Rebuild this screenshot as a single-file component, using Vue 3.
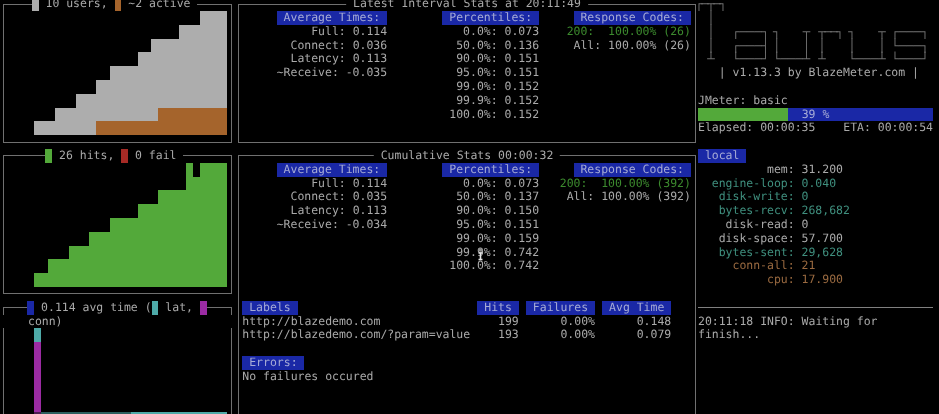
<script setup>
const expand = (steps) => steps.flatMap(([n, h]) => Array(n).fill(h))
const ROW = 13.8

const users = expand([[3,1],[3,2],[3,3],[2,4],[4,5],[2,6],[4,7],[3,8],[4,9]])
const active = expand([[9,0],[9,1],[10,2]])
const userBars = users.map((u, i) => ({ top: (u - active[i]) * ROW, bottom: active[i] * ROW }))
const hitBars = expand([[2,1],[3,2],[3,3],[3,4],[4,5],[3,6],[4,7],[1,9],[1,8],[4,9]]).map(h => h * ROW)
const timeBars = expand([[13,1],[14,2]])

const latest = {
  avg: ['Full: 0.114', 'Connect: 0.036', 'Latency: 0.113', '~Receive: -0.035'],
  pct: ['0.0%: 0.073','50.0%: 0.136','90.0%: 0.151','95.0%: 0.151','99.0%: 0.152','99.9%: 0.152','100.0%: 0.152'],
  codes: ['200:  100.00% (26)', 'All: 100.00% (26)'],
}
const cumulative = {
  avg: ['Full: 0.114', 'Connect: 0.035', 'Latency: 0.113', '~Receive: -0.034'],
  pct: ['0.0%: 0.073','50.0%: 0.137','90.0%: 0.150','95.0%: 0.151','99.0%: 0.159','99.9%: 0.742','100.0%: 0.742'],
  codes: ['200:  100.00% (392)', 'All: 100.00% (392)'],
}
const labels = [
  ['http://blazedemo.com', '199', '0.00%', '0.148'],
  ['http://blazedemo.com/?param=value', '193', '0.00%', '0.079'],
]
const logo = [
  ['┌─┬─┐', '  │', '  │', '  │', '  ┴'],
  [' ', ' ', '┌───┐', '┌───┤', '└───┘'],
  [' ', ' ', '┐   ┬', '│   │', '└───┴'],
  [' ', ' ', '┬──┐', '│', '┴'],
  [' ', ' ', '┐   ┬', '│   │', '└───┴'],
  [' ', ' ', '┌───┐', '└───┐', '└───┘'],
]
const metrics = [
  ['mem:', '31.200', ''],
  ['engine-loop:', '0.040', 'teal'],
  ['disk-write:', '0', 'teal'],
  ['bytes-recv:', '268,682', 'teal'],
  ['disk-read:', '0', ''],
  ['disk-space:', '57.700', ''],
  ['bytes-sent:', '29,628', 'teal'],
  ['conn-all:', '21', 'brown'],
  ['cpu:', '17.900', 'brown'],
]
</script>

<template>
  <div class="term">
    <div class="left">
      <section class="pane">
        <div class="title t-users"> <i class="sw gray"></i> 10 users, <i class="sw brown-bg"></i> ~2 active </div>
        <div class="chart">
          <div v-for="(b, i) in userBars" :key="i" class="col">
            <div class="gray" :style="{ height: b.top + 'px' }"></div>
            <div class="brown-bg" :style="{ height: b.bottom + 'px' }"></div>
          </div>
        </div>
      </section>
      <section class="pane">
        <div class="title t-hits"> <i class="sw green"></i> 26 hits, <i class="sw red"></i> 0 fail </div>
        <div class="chart">
          <div v-for="(h, i) in hitBars" :key="i" class="col">
            <div class="green" :style="{ height: h + 'px' }"></div>
          </div>
        </div>
      </section>
      <section class="pane open">
        <div class="title t-time"> <i class="sw blue"></i> 0.114 avg time (<i class="sw cyan"></i> lat, <i class="sw magenta"></i></div>
        <div class="title t-conn">conn)</div>
        <div class="chart chart-time">
          <div class="col">
            <div class="cyan seg-a"></div>
            <div class="magenta seg-b"></div>
            <div class="dark-magenta seg-c"></div>
          </div>
          <div v-for="(kind, i) in timeBars" :key="i" class="col">
            <div :class="kind === 1 ? 'dark-teal' : 'cyan'" class="seg-c"></div>
          </div>
        </div>
      </section>
    </div>

    <div class="middle">
      <section class="pane wide">
        <div class="title center"> Latest Interval Stats at 20:11:49 </div>
        <div class="stats">
          <div class="stack"><span class="hd"> Average Times: </span><span v-for="l in latest.avg" :key="l">{{ l }}</span></div>
          <div class="stack"><span class="hd"> Percentiles: </span><span v-for="l in latest.pct" :key="l">{{ l }}</span></div>
          <div class="stack">
            <span class="hd"> Response Codes: </span>
            <span class="ok">{{ latest.codes[0] }}</span>
            <span>{{ latest.codes[1] }}</span>
          </div>
        </div>
      </section>
      <section class="pane wide tall">
        <div class="title center"> Cumulative Stats 00:00:32 </div>
        <div class="stats">
          <div class="stack"><span class="hd"> Average Times: </span><span v-for="l in cumulative.avg" :key="l">{{ l }}</span></div>
          <div class="stack"><span class="hd"> Percentiles: </span><span v-for="l in cumulative.pct" :key="l">{{ l }}</span></div>
          <div class="stack">
            <span class="hd"> Response Codes: </span>
            <span class="ok">{{ cumulative.codes[0] }}</span>
            <span>{{ cumulative.codes[1] }}</span>
          </div>
        </div>
        <div class="table">
          <div><span class="hd"> Labels </span></div>
          <div class="num"><span class="hd"> Hits </span></div>
          <div class="num"><span class="hd"> Failures </span></div>
          <div class="num"><span class="hd"> Avg Time </span></div>
          <template v-for="r in labels" :key="r[0]">
            <div>{{ r[0] }}</div>
            <div class="num">{{ r[1] }}</div>
            <div class="num">{{ r[2] }}</div>
            <div class="num">{{ r[3] }}</div>
          </template>
        </div>
        <div class="errors">
          <div><span class="hd"> Errors: </span></div>
          <div>No failures occured</div>
        </div>
        <svg class="cursor" width="7" height="13" viewBox="0 0 7 13">
          <ellipse cx="3.5" cy="2" rx="2.4" ry="1.8" fill="#8d8d8d" />
          <path d="M1.5 5h4M3.5 5v6M1.5 11.5h4" stroke="#e4e4e4" stroke-width="1.6" fill="none" />
        </svg>
      </section>
    </div>

    <div class="right">
      <div class="logo">
        <div v-for="(letter, i) in logo" :key="i" class="glyph" :class="{ tight: i === 0 || i === 3 }">
          <div v-for="(row, j) in letter" :key="j">{{ row }}</div>
        </div>
      </div>
      <div class="tag">| v1.13.3 by BlazeMeter.com |</div>
      <div class="blank"></div>
      <div>JMeter: basic</div>
      <div class="progress">
        <div class="done"></div>
        <div class="pct">39 %</div>
      </div>
      <div class="split"><span>Elapsed: 00:00:35</span><span>ETA: 00:00:54</span></div>
      <div class="blank"></div>
      <div><span class="hd"> local </span></div>
      <div v-for="m in metrics" :key="m[0]" class="metric" :class="m[2]">
        <span class="k">{{ m[0] }}</span><span>{{ m[1] }}</span>
      </div>
      <div class="blank"></div>
      <div class="rule"></div>
      <div class="log">20:11:18 INFO: Waiting for finish...</div>
    </div>
  </div>
</template>

<style scoped>
.term {
  width: 939px;
  height: 414px;
  overflow: hidden;
  box-sizing: border-box;
  background: #000;
  color: #a9a9a9;
  font-family: "DejaVu Sans Mono", "Liberation Mono", monospace;
  font-size: 11.47px;
  line-height: 13.8px;
  text-rendering: geometricPrecision;
  white-space: pre;
  display: flex;
  align-items: flex-start;
  padding: 3.6px 0 0 3px;
  filter: blur(0.35px);
}
.left { width: 229px; display: flex; flex-direction: column; gap: 12.8px; flex: none; }
.middle { width: 458px; margin-left: 6px; display: flex; flex-direction: column; gap: 12.8px; flex: none; }
.right { width: 235px; margin-left: 2px; margin-top: -6.4px; flex: none; }

.pane {
  position: relative;
  box-sizing: border-box;
  height: 139px;
  border: 1px solid #707070;
  padding-top: 6.4px;
}
.pane.open { height: 140px; }
.pane.tall { height: 290px; }
.wide { padding-left: 3.3px; }

.title { position: absolute; top: -7.4px; background: #000; }
.center { left: 50%; transform: translateX(-50%); }
.t-users { left: 27.7px; }
.t-hits { left: 41.3px; }
.t-time { left: 23.3px; }
.t-conn { top: 6.4px; left: -1px; right: -1px; padding-left: 25px; }

.sw { display: inline-block; width: 1ch; height: 13.8px; vertical-align: top; }
.gray { background: #adadad; }
.brown-bg { background: #a5642c; }
.green { background: #53a93a; }
.red { background: #a62a25; }
.blue { background: #1a28a6; }
.cyan { background: #4eaaa8; }
.magenta { background: #9b2ba3; }
.dark-magenta { background: #4d1c52; }
.dark-teal { background: #2c5f5e; }

.chart {
  display: flex;
  align-items: flex-end;
  height: 124.2px;
  margin-left: 30.3px;
}
.col { width: 6.9px; flex: none; }
.chart-time { height: 85.8px; margin-top: 13.6px; }
.seg-a { height: 13.5px; }
.seg-b { height: 70.3px; }
.seg-c { height: 2px; }

.stats {
  display: grid;
  grid-template-columns: 16ch 22ch 22ch;
  margin-left: 34.4px;
}
.stack { display: flex; flex-direction: column; align-items: flex-end; }
.hd { display: inline-block; background: #1a28a6; color: #a6abd6; }
.ok { color: #3c8a2e; }

.table {
  display: grid;
  grid-template-columns: 33ch 6ch 10ch 10ch;
  column-gap: 7.2px;
  margin-top: 27.6px;
}
.num { text-align: right; }
.errors { margin-top: 13.8px; }
.cursor { position: absolute; left: 238px; top: 91.6px; }

.logo {
  display: grid;
  grid-template-columns: 36.7px 41px 45.3px 30px 43px auto;
  margin-left: -2.7px;
  color: #6e6e6e;
}
.glyph { font-size: 12.4px; line-height: 13.8px; }
.tight { letter-spacing: -1.5px; }

.tag { padding-left: 3ch; }
.blank { height: 13.8px; }
.progress {
  display: flex;
  position: relative;
  height: 13.8px;
  background: #1a28a6;
}
.done { width: 90.3px; background: #53a93a; }
.pct { position: absolute; left: 0; right: 0; text-align: center; color: #a6abd6; }
.split { display: flex; justify-content: space-between; }
.metric { display: grid; grid-template-columns: 14ch 1fr; column-gap: 1ch; }
.k { text-align: right; }
.teal { color: #3f8f7e; }
.brown { color: #9a6a40; }
.rule { height: 13.8px; position: relative; }
.rule::after { content: ""; position: absolute; left: 0; right: 0; top: 6.4px; height: 1px; background: #808080; }
.log { white-space: pre-wrap; width: 190px; }
</style>

<style>
html, body { margin: 0; background: #000; }
</style>
